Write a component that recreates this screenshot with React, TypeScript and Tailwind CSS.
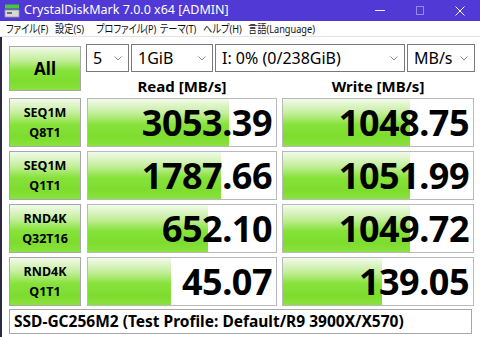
import React from "react";

const rows = [
  { a: "SEQ1M", b: "Q8T1", read: "3053.39", rp: 75, write: "1048.75", wp: 67 },
  { a: "SEQ1M", b: "Q1T1", read: "1787.66", rp: 71, write: "1051.99", wp: 67 },
  { a: "RND4K", b: "Q32T16", read: "652.10", rp: 64, write: "1049.72", wp: 67 },
  { a: "RND4K", b: "Q1T1", read: "45.07", rp: 44, write: "139.05", wp: 52 },
];

const menu = [
  { t: "ファイル(F)", w: "w-[49px]" },
  { t: "設定(S)", w: "w-[41px]" },
  { t: "プロファイル(P)", w: "w-[64px]" },
  { t: "テーマ(T)", w: "w-[43px]" },
  { t: "ヘルプ(H)", w: "w-[45px]" },
  { t: "言語(Language)", w: "w-[80px]" },
];

const green = "bg-[linear-gradient(to_bottom,#f2faea_0%,#c4ee9c_30%,#86e23a_55%,#7edc2e_80%,#8ae23e_100%)]";

function Select({ value, w }: { value: string; w: string }) {
  return (
    <div className={`${w} h-[28px] border border-[#7a7a7a] bg-white flex items-center justify-between pl-[6px] pr-[6px] text-[16px] text-black`}>
      <span>{value}</span>
      <svg width="8" height="5" viewBox="0 0 8 5" className="mt-[1px]">
        <path d="M0.5 0.5 L4 4 L7.5 0.5" fill="none" stroke="#8a8a8a" strokeWidth="1" />
      </svg>
    </div>
  );
}

function Meter({ value, pct, w }: { value: string; pct: number; w: string }) {
  return (
    <div className={`${w} h-[49px] border border-[#b9b9b9] bg-white relative overflow-hidden`}>
      <div className={`absolute left-0 top-0 bottom-0 ${green}`} style={{ width: `${pct}%` }} />
      <div className="relative h-full flex items-center justify-end pr-[4px] text-[36px] font-bold leading-none text-black tracking-[-0.5px]">
        {value}
      </div>
    </div>
  );
}

export default function App() {
  return (
    <div className="w-[480px] h-[337px] bg-white overflow-hidden flex flex-col" style={{ fontFamily: '"Noto Sans", "Noto Sans CJK JP", sans-serif' }}>
      {/* title bar */}
      <div className="h-[21px] bg-[#5039d4] flex items-center text-white">
        <svg width="16" height="14" viewBox="0 0 16 14" className="ml-[4px] mr-[4px]">
          <rect x="1" y="0.5" width="14" height="4" fill="#46c83c" />
          <rect x="1" y="6" width="14" height="7" fill="#d8d8d8" stroke="#9a9a9a" strokeWidth="0.8" />
          <rect x="3" y="8" width="5" height="2" fill="#707070" />
        </svg>
        <span className="text-[12.5px] leading-none">CrystalDiskMark 7.0.0 x64 [ADMIN]</span>
        <div className="ml-auto flex items-center h-full">
          <div className="w-[40px] flex justify-center">
            <div className="w-[10px] h-px bg-white/90" />
          </div>
          <div className="w-[40px] flex justify-center">
            <div className="w-[8px] h-[9px] border border-white/40" />
          </div>
          <div className="w-[40px] flex justify-center">
            <svg width="10" height="10" viewBox="0 0 10 10">
              <path d="M0.5 0.5 L9.5 9.5 M9.5 0.5 L0.5 9.5" stroke="white" strokeWidth="1" />
            </svg>
          </div>
        </div>
      </div>

      {/* menu */}
      <div className="h-[16px] bg-white flex items-center text-[11.5px] leading-none text-[#111] border-b border-[#e3e3e3] pl-[6px] whitespace-nowrap [font-feature-settings:'palt']">
        {menu.map((m) => (
          <span key={m.t} className={`${m.w} shrink-0`}>
            <span className="inline-block origin-left scale-x-[0.8]">{m.t}</span>
          </span>
        ))}
      </div>

      {/* body */}
      <div className="flex-1 border-l-2 border-[#2c2840] pl-[7px] pt-[7px] flex flex-col">
        <div className="flex">
          <div className={`w-[72px] h-[45px] mt-[2px] border border-[#a8a8a8] ${green} flex items-center justify-center text-[17px] font-bold text-black`}>
            All
          </div>
          <div className="ml-[5px] flex flex-col">
            <div className="flex gap-[2px]">
              <Select value="5" w="w-[43px]" />
              <Select value="1GiB" w="w-[82px]" />
              <Select value="I: 0% (0/238GiB)" w="w-[190px]" />
              <Select value="MB/s" w="w-[68px]" />
            </div>
            <div className="flex mt-[4px] text-[15px] font-bold text-black leading-[20px]">
              <div className="w-[190px] ml-[1px] text-center">Read [MB/s]</div>
              <div className="w-[192px] ml-[5px] text-center">Write [MB/s]</div>
            </div>
          </div>
        </div>

        <div className="flex flex-col gap-[4px] mt-[2px]">
          {rows.map((r, i) => (
            <div key={i} className="flex">
              <div className={`w-[72px] h-[49px] border border-[#a8a8a8] ${green} flex flex-col items-center justify-center text-[12.5px] font-bold text-black leading-[20px]`}>
                <span>{r.a}</span>
                <span>{r.b}</span>
              </div>
              <div className="ml-[6px]">
                <Meter value={r.read} pct={r.rp} w="w-[190px]" />
              </div>
              <div className="ml-[5px]">
                <Meter value={r.write} pct={r.wp} w="w-[192px]" />
              </div>
            </div>
          ))}
        </div>

        <div className="mt-[3px] w-[463px] h-[25px] border border-[#a8a8a8] flex items-center pl-[4px] text-[15.5px] font-bold text-black">
          SSD-GC256M2 (Test Profile: Default/R9 3900X/X570)
        </div>
      </div>
    </div>
  );
}
